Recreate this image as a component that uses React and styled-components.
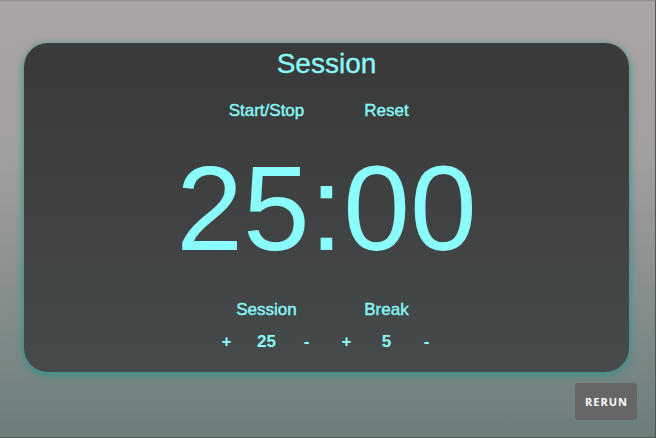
import styled, { createGlobalStyle } from 'styled-components';

const GlobalStyle = createGlobalStyle`
  html, body {
    margin: 0;
    padding: 0;
    height: 100%;
  }
  body {
    font-family: "Liberation Sans", Arial, Helvetica, sans-serif;
    background: linear-gradient(to bottom, #aca4a4 0%, #a29f9f 35%, #7f8a89 75%, #6b7e7c 100%);
    overflow: hidden;
  }
`;

const Page = styled.div`
  box-sizing: border-box;
  height: 438px;
  padding-top: 43px;
  border-top: 1px solid #948e8e;
  border-right: 1px solid #4c5756;
  border-bottom: 1px solid #4c5756;
`;

const Clock = styled.div`
  width: 605px;
  margin-left: 24px;
  margin-top: -1px;
  padding: 7px 0 22px;
  border-radius: 24px;
  background: linear-gradient(to bottom, #393939, #464a4b);
  box-shadow: 0 2px 7px 1px rgba(48, 150, 140, 0.9);
  color: #8afcfc;
  display: flex;
  flex-direction: column;
  align-items: center;
`;

const Title = styled.h1`
  margin: 0;
  font-size: 28px;
  line-height: 28px;
  font-weight: normal;
  -webkit-text-stroke: 0.3px #8afcfc;
`;

const Pair = styled.div`
  display: grid;
  grid-template-columns: 120px 120px;
  margin-top: ${(p) => p.$top}px;
`;

const Label = styled.div`
  text-align: center;
  font-size: 17px;
  line-height: 17px;
  -webkit-text-stroke: 0.35px #8afcfc;
  cursor: ${(p) => (p.$button ? 'pointer' : 'default')};
`;

const Time = styled.div`
  margin-top: 29px;
  font-size: 120px;
  line-height: 120px;
`;

const Stepper = styled.div`
  display: grid;
  grid-template-columns: repeat(3, 40px);
  text-align: center;
  font-size: 17px;
  line-height: 17px;
  font-weight: bold;
`;

const Step = styled.span`
  cursor: pointer;
`;

const Rerun = styled.button`
  position: fixed;
  right: 19px;
  bottom: 18px;
  width: 62px;
  height: 37px;
  border: none;
  border-radius: 3px;
  background: #666666;
  color: #ffffff;
  font-family: "Open Sans", "Liberation Sans", sans-serif;
  font-weight: bold;
  font-size: 11px;
  letter-spacing: 1px;
  padding: 0 0 0 1px;
  cursor: pointer;
`;

const lengths = [
  { name: 'Session', value: 25 },
  { name: 'Break', value: 5 },
];

export default function App() {
  return (
    <>
      <GlobalStyle />
      <Page>
        <Clock>
          <Title>Session</Title>
          <Pair $top={24}>
            <Label $button>Start/Stop</Label>
            <Label $button>Reset</Label>
          </Pair>
          <Time>25:00</Time>
          <Pair $top={33}>
            {lengths.map((l) => (
              <Label key={l.name}>{l.name}</Label>
            ))}
          </Pair>
          <Pair $top={15}>
            {lengths.map((l) => (
              <Stepper key={l.name}>
                <Step>+</Step>
                <span>{l.value}</span>
                <Step>-</Step>
              </Stepper>
            ))}
          </Pair>
        </Clock>
      </Page>
      <Rerun>RERUN</Rerun>
    </>
  );
}
